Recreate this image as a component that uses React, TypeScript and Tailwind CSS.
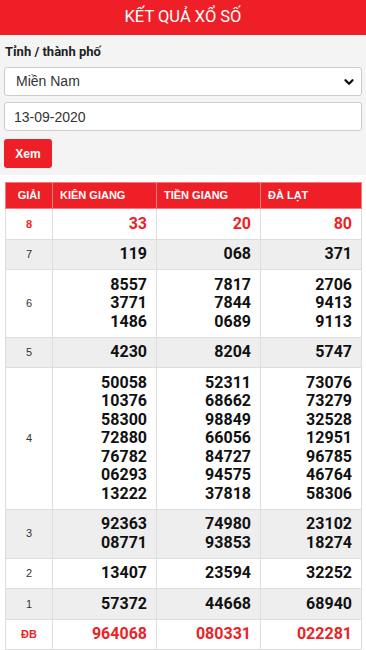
import { ChevronDown } from "lucide-react";

type Row = { label: string; nums: string[][]; gray?: boolean; red?: boolean };

const rows: Row[] = [
  { label: "8", nums: [["33"], ["20"], ["80"]], red: true },
  { label: "7", nums: [["119"], ["068"], ["371"]], gray: true },
  {
    label: "6",
    nums: [
      ["8557", "3771", "1486"],
      ["7817", "7844", "0689"],
      ["2706", "9413", "9113"],
    ],
  },
  { label: "5", nums: [["4230"], ["8204"], ["5747"]], gray: true },
  {
    label: "4",
    nums: [
      ["50058", "10376", "58300", "72880", "76782", "06293", "13222"],
      ["52311", "68662", "98849", "66056", "84727", "94575", "37818"],
      ["73076", "73279", "32528", "12951", "96785", "46764", "58306"],
    ],
  },
  {
    label: "3",
    nums: [
      ["92363", "08771"],
      ["74980", "93853"],
      ["23102", "18274"],
    ],
    gray: true,
  },
  { label: "2", nums: [["13407"], ["23594"], ["32252"]] },
  { label: "1", nums: [["57372"], ["44668"], ["68940"]], gray: true },
  { label: "ĐB", nums: [["964068"], ["080331"], ["022281"]], red: true },
];

export default function App() {
  return (
    <div className="w-[366px] h-[650px] overflow-hidden bg-white font-['Roboto',sans-serif]">
      {/* Thanh tiêu đề */}
      <div className="h-[35px] bg-[#ee1f26] flex items-center justify-center text-white text-[16.5px] leading-none">
        KẾT QUẢ XỔ SỐ
      </div>

      {/* Form chọn tỉnh / ngày */}
      <div className="bg-[#f4f4f4] px-[4px] pt-[9px] pb-[7px]">
        <div className="text-[13px] font-bold text-[#222] leading-[16px] pl-[1px]">Tỉnh / thành phố</div>
        <div className="relative mt-[7px]">
          <select className="appearance-none w-full h-[29px] bg-white border border-[#ccc] rounded-[3px] pl-[11px] text-[14px] text-[#333] font-['Liberation_Sans',sans-serif] outline-none">
            <option>Miền Nam</option>
          </select>
          <ChevronDown className="absolute right-[6px] top-[8px] w-[14px] h-[14px] text-[#111]" strokeWidth={4} />
        </div>
        <input
          defaultValue="13-09-2020"
          className="mt-[6px] block w-full h-[29px] bg-white border border-[#ccc] rounded-[3px] pl-[9px] text-[14px] text-[#333] font-['Liberation_Sans',sans-serif] outline-none"
        />
        <button className="mt-[8px] w-[48px] h-[29px] bg-[#ee1f26] rounded-[3px] text-white text-[12px] font-bold font-['Liberation_Sans',sans-serif]">
          Xem
        </button>
      </div>

      {/* Bảng kết quả */}
      <div className="px-[4px] pt-[7px]">
        <table className="w-[357px] border-collapse table-fixed ml-[1px]">
          <colgroup>
            <col className="w-[47px]" />
            <col className="w-[104px]" />
            <col className="w-[104px]" />
            <col />
          </colgroup>
          <thead>
            <tr className="bg-[#ee1f26] text-white text-[11px] font-bold font-['Liberation_Sans',sans-serif] h-[26px]">
              <th className="border border-[#f37b7f] text-center">GIẢI</th>
              <th className="border border-[#f37b7f] text-left pl-[7px]">KIÊN GIANG</th>
              <th className="border border-[#f37b7f] text-left pl-[7px]">TIỀN GIANG</th>
              <th className="border border-[#f37b7f] text-left pl-[7px]">ĐÀ LẠT</th>
            </tr>
          </thead>
          <tbody>
            {rows.map((r) => (
              <tr key={r.label} className={r.gray ? "bg-[#eeeeee]" : "bg-white"}>
                <td
                  className={
                    "border border-[#dddddd] text-center text-[11px] font-['Liberation_Sans',sans-serif] " +
                    (r.red ? "text-[#ee1f26] font-bold" : "text-[#333]")
                  }
                >
                  {r.label}
                </td>
                {r.nums.map((col, i) => (
                  <td
                    key={i}
                    className={
                      "border border-[#dddddd] text-right pr-[9px] py-[5.5px] text-[16px] font-bold leading-[18.5px] " +
                      (r.red ? "text-[#ee1f26]" : "text-[#111]")
                    }
                  >
                    {col.map((n) => (
                      <div key={n}>{n}</div>
                    ))}
                  </td>
                ))}
              </tr>
            ))}
          </tbody>
        </table>
      </div>
    </div>
  );
}
